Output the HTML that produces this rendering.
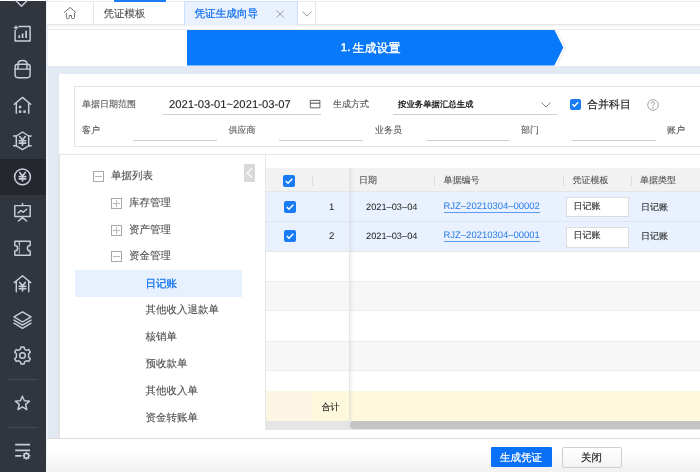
<!DOCTYPE html>
<html><head><meta charset="utf-8">
<style>
*{margin:0;padding:0;box-sizing:border-box}
html,body{width:700px;height:472px;overflow:hidden;background:#fff;font-family:"Liberation Sans",sans-serif;color:#333;text-rendering:geometricPrecision}
.a{position:absolute}
.t{position:absolute;white-space:nowrap;line-height:1}
#side{left:0;top:1px;width:46px;height:471px;background:#31353d}
#side svg{position:absolute;left:0;top:0}
.sep{position:absolute;left:7px;width:30px;height:1px;background:#474b53}
</style></head><body>
<div style="position:absolute;left:0;top:0;width:700px;height:472px;will-change:transform">
<!-- top strip -->
<div class="a" style="left:47px;top:1px;width:653px;height:1px;background:#ececec"></div>
<div class="a" style="left:114px;top:0;width:52px;height:1.5px;background:#1a7cf5"></div>
<!-- sidebar -->
<div id="side" class="a">
  <div class="a" style="left:0;top:158px;width:46px;height:36px;background:#24272d"></div>
  <div class="sep" style="top:378px"></div>
  <div class="sep" style="top:426px"></div>
</div>
<div class="a" style="left:46px;top:0;width:1.5px;height:472px;background:#eef1f5"></div>
<svg class="a" style="left:0;top:0" width="46" height="472" viewBox="0 0 46 472" fill="none" stroke="#c9cdd9" stroke-width="1.45" stroke-linejoin="round" stroke-linecap="round">
  <path d="M16 0.8 L21.5 6.2 L27 0.8" stroke-width="1.5"/>
  <path d="M19 26.4 H30.1 V40.9 H15.1 V30.4"/>
  <path d="M16 25.9 V29.5 M14.2 27.7 H17.8" stroke-width="1.3"/>
  <path d="M19.3 38 V35.2 M22.6 38 V33.4 M26.1 38 V30.7" stroke-width="1.7" stroke-linecap="butt"/>
  <rect x="15.1" y="64.2" width="15" height="13.5" rx="2.6"/>
  <path d="M15.1 69.1 H30.1 M18 69.1 V63.8 Q18 60.4 22.5 60.4 Q27 60.4 27 63.8 V69.1"/>
  <path d="M14.3 104.3 L22.5 97.4 L30.7 104.3 M16.3 102.6 V113.2 M28.7 102.6 V113.2"/>
  <g fill="#c9cdd9" stroke="none"><rect x="18.8" y="105.8" width="2.5" height="2.4"/><rect x="18.8" y="110.4" width="2.5" height="2.5"/><rect x="23.3" y="110.4" width="2.5" height="2.5"/></g>
  <path d="M16.3 136 L22.5 132 L28.7 136 V145.8 L22.5 149.6 L16.3 145.8 Z"/>
  <path d="M13.6 136 H16.3 M28.7 136 H31.2 M13.6 145.8 H16.3 M28.7 145.8 H31.2"/>
  <path d="M19.7 136.6 L22.5 140.1 L25.3 136.6 M22.5 140.1 V145.3 M19.2 140.8 H25.8 M19.2 143.1 H25.8" stroke-width="1.6"/>
  <circle cx="22.5" cy="176.9" r="7.9" stroke-width="1.55"/>
  <path d="M19.7 172.4 L22.5 175.9 L25.3 172.4 M22.5 175.9 V181 M19.2 176.6 H25.8 M19.2 178.9 H25.8" stroke-width="1.6"/>
  <path d="M22.5 203.4 V205.6"/>
  <rect x="14.8" y="205.6" width="15.4" height="10.9"/>
  <path d="M18.2 213.1 L20.8 210.4 L23.2 212.3 L26.6 209.3"/>
  <path d="M22.5 216.5 V217.6 L18.4 221 M22.5 217.6 L26.6 221"/>
  <path d="M14.8 241.3 H30.2 V245.4 A2.8 2.8 0 0 0 30.2 251 V255.2 H14.8 V251 A2.8 2.8 0 0 0 14.8 245.4 Z"/>
  <path d="M19.3 242.8 V244.8 M19.3 246.6 V246.8 M19.3 248.6 V248.8 M19.3 250.6 V250.8 M19.3 252.6 V252.8" stroke-width="1.4"/>
  <path d="M14.3 282.6 L22.5 275.8 L30.7 282.6 M16.3 281 V291.8 M28.7 281 V291.8"/>
  <path d="M19.7 282.4 L22.5 285.8 L25.3 282.4 M22.5 285.8 V291 M19.2 286.4 H25.8 M19.2 288.7 H25.8" stroke-width="1.6"/>
  <path d="M22.5 311.8 L31 316.9 L22.5 322 L14 316.9 Z"/>
  <path d="M14 320.1 L22.5 325.2 L31 320.1 M14 323.2 L22.5 328.3 L31 323.2"/>
  <path d="M21 347 H24 L24.6 349.2 L26.6 350.3 L28.8 349.6 L30.3 352.2 L28.6 353.8 V357.2 L30.3 358.8 L28.8 361.4 L26.6 360.7 L24.6 361.8 L24 364 H21 L20.4 361.8 L18.4 360.7 L16.2 361.4 L14.7 358.8 L16.4 357.2 V353.8 L14.7 352.2 L16.2 349.6 L18.4 350.3 L20.4 349.2 Z"/>
  <circle cx="22.5" cy="355.5" r="2.8"/>
  <path d="M22.4 396.2 L24.4 400.7 L29.5 401.1 L25.6 404.4 L26.8 409.6 L22.4 406.9 L18 409.6 L19.2 404.4 L15.3 401.1 L20.4 400.7 Z"/>
  <path d="M15.2 444.7 H30.1 M15.2 450.3 H30.1 M15.2 455.8 H21.4" stroke-width="1.7" stroke-linecap="butt"/>
  <circle cx="26.4" cy="455.8" r="2.3" stroke-width="1.6"/>
  <path d="M26.4 452.4 V453 M26.4 458.6 V459.2 M23 455.8 H23.6 M29.2 455.8 H29.8 M24 453.4 L24.4 453.8 M28.4 457.8 L28.8 458.2 M28.8 453.4 L28.4 453.8 M24.4 457.8 L24 458.2" stroke-width="1.4"/>
</svg>

<!-- tab bar -->
<div class="a" style="left:47px;top:2px;width:653px;height:23px;background:#fff;border-bottom:1px solid #e6e6e6;box-shadow:0 1px 1px rgba(0,0,0,0.05)"></div>
<div class="a" style="left:93px;top:2px;width:1px;height:22px;background:#e6e6e6"></div>
<svg class="a" style="left:60px;top:4px" width="22" height="18" viewBox="0 0 22 18" fill="none" stroke="#707070" stroke-width="1" stroke-linejoin="round" stroke-linecap="round">
  <path d="M4.3 8.4 L10.2 3.4 L15.8 8.4 M6.3 9.2 V13.4 Q6.3 14.7 7.6 14.7 Q9.2 14.7 9.2 13.6 V11.5 H11.5 V13.6 Q11.5 14.7 12.8 14.7 Q14.5 14.7 14.5 13.4 V9.2"/>
</svg>
<div class="t" style="left:103.5px;top:8.5px;font-size:10.5px;color:#505050;font-weight:500;-webkit-text-stroke:0.12px #505050">凭证模板</div>
<div class="a" style="left:184px;top:1px;width:114px;height:24px;background:#e8f1fd;border:1px solid #c9def9;border-bottom:none"></div>
<div class="t" style="left:194.5px;top:8.5px;font-size:10.6px;color:#1270ee;font-weight:500;-webkit-text-stroke:0.25px #1270ee">凭证生成向导</div>
<svg class="a" style="left:275.8px;top:10px" width="9" height="8" viewBox="0 0 9 8" stroke="#999" stroke-width="1"><path d="M0.5 0.4 L7.8 7.6 M7.8 0.4 L0.5 7.6"/></svg>
<div class="a" style="left:315px;top:2px;width:1px;height:22px;background:#e6e6e6"></div>
<svg class="a" style="left:301.5px;top:10.8px" width="10" height="6" viewBox="0 0 10 6" fill="none" stroke="#999" stroke-width="1"><path d="M0.5 0.5 L5 5.2 L9.5 0.5"/></svg>

<!-- step container -->
<div class="a" style="left:47px;top:29px;width:653px;height:1px;background:#ececec"></div>
<svg class="a" style="left:187px;top:30px" width="382" height="36" viewBox="0 0 382 36"><path d="M369.6 0 L378.6 17.6 L369.6 35.5" fill="none" stroke="#e9e9e9" stroke-width="1"/><path d="M0 0 H367.5 L376.3 17.6 L367.3 35.5 H0 Z" fill="#0879fa"/></svg>
<div class="t" style="left:340.8px;top:42.6px;font-size:11.4px;color:#fff;-webkit-text-stroke:0.4px #fff">1.</div><div class="t" style="left:352.5px;top:41.5px;font-size:12px;color:#fff;font-weight:500;-webkit-text-stroke:0.35px #fff">生成设置</div>

<!-- gray band & strip -->
<div class="a" style="left:47px;top:66px;width:653px;height:8px;background:#e3e9f2"></div>
<div class="a" style="left:47.5px;top:66px;width:11px;height:372px;background:#e3e9f2"></div>

<!-- form box -->
<div class="a" style="left:74px;top:86px;width:640px;height:61px;border:1px solid #e3e3e3"></div>
<div class="t" style="left:82px;top:99.5px;font-size:9px;color:#575757;font-weight:500;-webkit-text-stroke:0.12px #575757">单据日期范围</div>
<div class="t" style="left:169px;top:100px;font-size:11.25px;color:#222;-webkit-text-stroke:0.1px #222">2021-03-01~2021-03-07</div>
<svg class="a" style="left:309px;top:99px" width="12" height="10" viewBox="0 0 12 10" fill="none" stroke="#3a3a3a" stroke-width="0.9"><path d="M1.3 1.4 H10.9 V8.8 H1.3 Z" stroke="#555" stroke-linejoin="round"/><path d="M1.3 4.2 H10.9"/></svg>
<div class="a" style="left:163px;top:114px;width:158px;height:1px;background:#cfcfcf"></div>
<div class="t" style="left:333px;top:99.5px;font-size:9px;color:#575757;font-weight:500;-webkit-text-stroke:0.12px #575757">生成方式</div>
<div class="t" style="left:398px;top:99.5px;font-size:8.4px;color:#1a1a1a;font-weight:500;-webkit-text-stroke:0.3px #1a1a1a">按业务单据汇总生成</div>
<svg class="a" style="left:541px;top:102px" width="10" height="6" viewBox="0 0 10 6" fill="none" stroke="#888" stroke-width="1"><path d="M0.5 0.5 L5 5 L9.5 0.5"/></svg>
<div class="a" style="left:393px;top:114px;width:164px;height:1px;background:#cfcfcf"></div>
<div class="a" style="left:570px;top:99px;width:10.5px;height:10.5px;background:#1a7cf5;border-radius:2px"></div>
<svg class="a" style="left:570px;top:99px" width="10.5" height="10.5" viewBox="0 0 11 11" fill="none" stroke="#fff" stroke-width="1.4"><path d="M2.5 5.5 L4.6 7.6 L8.6 3.4"/></svg>
<div class="t" style="left:587px;top:100px;font-size:11px;color:#222;font-weight:500;-webkit-text-stroke:0.15px #222">合并科目</div>
<svg class="a" style="left:647px;top:99px" width="12" height="12" viewBox="0 0 12 12" fill="none" stroke="#999" stroke-width="0.9"><circle cx="6" cy="6" r="5.3"/><path d="M4.3 4.6 Q4.3 2.9 6 2.9 Q7.7 2.9 7.7 4.4 Q7.7 5.4 6 6.2 V7.3"/><circle cx="6" cy="8.9" r="0.4" fill="#999"/></svg>

<div class="t" style="left:82px;top:125.5px;font-size:9px;color:#575757;font-weight:500;-webkit-text-stroke:0.12px #575757">客户</div>
<div class="a" style="left:133px;top:140px;width:84px;height:1px;background:#cfcfcf"></div>
<div class="t" style="left:228.5px;top:125.5px;font-size:9px;color:#575757;font-weight:500;-webkit-text-stroke:0.12px #575757">供应商</div>
<div class="a" style="left:279px;top:140px;width:84px;height:1px;background:#cfcfcf"></div>
<div class="t" style="left:375px;top:125.5px;font-size:9px;color:#575757;font-weight:500;-webkit-text-stroke:0.12px #575757">业务员</div>
<div class="a" style="left:426px;top:140px;width:84px;height:1px;background:#cfcfcf"></div>
<div class="t" style="left:521px;top:125.5px;font-size:9px;color:#575757;font-weight:500;-webkit-text-stroke:0.12px #575757">部门</div>
<div class="a" style="left:572px;top:140px;width:84px;height:1px;background:#cfcfcf"></div>
<div class="t" style="left:667px;top:125.5px;font-size:9px;color:#575757;font-weight:500;-webkit-text-stroke:0.12px #575757">账户</div>

<!-- divider line -->
<div class="a" style="left:59px;top:154px;width:641px;height:1px;background:#e6e6e6"></div>

<!-- tree -->
<div class="a" style="left:58.3px;top:154px;width:1.5px;height:284px;background:#e3e3e3"></div>
<div class="a" style="left:265px;top:155px;width:1px;height:275px;background:#e6e6e6"></div>
<div class="a" style="left:244px;top:164px;width:11px;height:18px;background:#d9d9d9"></div>
<svg class="a" style="left:244px;top:164px" width="11" height="18" viewBox="0 0 11 18" fill="none" stroke="#fff" stroke-width="1.2"><path d="M7.9 4.2 L3.2 9 L7.9 13.7"/></svg>

<div class="a" style="left:93px;top:171px;width:11px;height:10.5px;border:1px solid #a8a8a8"></div>
<div class="a" style="left:95px;top:175.5px;width:7px;height:1.3px;background:#b8b8b8"></div>
<div class="t" style="left:111px;top:171px;font-size:10.5px;color:#505050;font-weight:500;-webkit-text-stroke:0.12px #505050">单据列表</div>

<div class="a" style="left:111px;top:198px;width:11px;height:10.5px;border:1px solid #a8a8a8"></div>
<div class="a" style="left:113px;top:202.5px;width:7px;height:1.3px;background:#b8b8b8"></div>
<div class="a" style="left:115.9px;top:199.9px;width:1.3px;height:7px;background:#b8b8b8"></div>
<div class="t" style="left:129px;top:198px;font-size:10.5px;color:#505050;font-weight:500;-webkit-text-stroke:0.12px #505050">库存管理</div>

<div class="a" style="left:111px;top:225px;width:11px;height:10.5px;border:1px solid #a8a8a8"></div>
<div class="a" style="left:113px;top:229.5px;width:7px;height:1.3px;background:#b8b8b8"></div>
<div class="a" style="left:115.9px;top:226.9px;width:1.3px;height:7px;background:#b8b8b8"></div>
<div class="t" style="left:129px;top:225px;font-size:10.5px;color:#505050;font-weight:500;-webkit-text-stroke:0.12px #505050">资产管理</div>

<div class="a" style="left:111px;top:251px;width:11px;height:10.5px;border:1px solid #a8a8a8"></div>
<div class="a" style="left:113px;top:255.5px;width:7px;height:1.3px;background:#b8b8b8"></div>
<div class="t" style="left:129px;top:251px;font-size:10.5px;color:#505050;font-weight:500;-webkit-text-stroke:0.12px #505050">资金管理</div>

<div class="a" style="left:75px;top:270px;width:167px;height:27px;background:#e7f1fd"></div>
<div class="t" style="left:145.5px;top:278.5px;font-size:10.5px;color:#1674f2;font-weight:500;-webkit-text-stroke:0.3px #1674f2">日记账</div>
<div class="t" style="left:145.5px;top:305px;font-size:10.5px;color:#505050;font-weight:500;-webkit-text-stroke:0.12px #505050">其他收入退款单</div>
<div class="t" style="left:145.5px;top:332px;font-size:10.5px;color:#505050;font-weight:500;-webkit-text-stroke:0.12px #505050">核销单</div>
<div class="t" style="left:145.5px;top:359px;font-size:10.5px;color:#505050;font-weight:500;-webkit-text-stroke:0.12px #505050">预收款单</div>
<div class="t" style="left:145.5px;top:386px;font-size:10.5px;color:#505050;font-weight:500;-webkit-text-stroke:0.12px #505050">其他收入单</div>
<div class="t" style="left:145.5px;top:413px;font-size:10.5px;color:#505050;font-weight:500;-webkit-text-stroke:0.12px #505050">资金转账单</div>

<!-- grid -->
<div class="a" style="left:266px;top:168px;width:434px;height:24px;background:#f2f2f2;border-bottom:1px solid #e6e6e6"></div>
<div class="a" style="left:266px;top:192px;width:434px;height:59px;background:#e8f1fd"></div>
<div class="a" style="left:266px;top:221px;width:434px;height:1px;background:#dde6f0"></div>
<div class="a" style="left:266px;top:251px;width:434px;height:1px;background:#e6e6e6"></div>
<div class="a" style="left:266px;top:281px;width:434px;height:30px;background:#f7f7f7;border-top:1px solid #ececec;border-bottom:1px solid #ececec"></div>
<div class="a" style="left:266px;top:341px;width:434px;height:30px;background:#f7f7f7;border-top:1px solid #ececec;border-bottom:1px solid #ececec"></div>
<!-- total row -->
<div class="a" style="left:266px;top:391px;width:434px;height:30px;background:#fef8dd"></div>
<div class="a" style="left:266px;top:391px;width:46px;height:30px;background:#fdf5e4"></div>
<div class="t" style="left:321.5px;top:402.5px;font-size:9px;color:#222;font-weight:500;-webkit-text-stroke:0.15px #222">合计</div>
<!-- scrollbar -->
<div class="a" style="left:266px;top:421px;width:434px;height:9px;background:#e5e5e5"></div>
<div class="a" style="left:350px;top:421px;width:360px;height:8px;background:#c4c4c4;border-radius:4px"></div>
<!-- frozen boundary -->
<div class="a" style="left:349px;top:168px;width:1px;height:253px;background:#e3e3e3"></div>
<div class="a" style="left:350px;top:168px;width:4px;height:253px;background:linear-gradient(to right,rgba(0,0,0,0.05),rgba(0,0,0,0))"></div>

<div class="a" style="left:283px;top:175px;width:12px;height:12px;background:#1a7cf5;border-radius:2px"></div>
<svg class="a" style="left:283px;top:175px" width="12" height="12" viewBox="0 0 12 12" fill="none" stroke="#fff" stroke-width="1.5"><path d="M2.8 6 L5 8.2 L9.3 3.8"/></svg>
<div class="a" style="left:312px;top:176px;width:1px;height:10px;background:#ddd"></div>
<div class="t" style="left:359px;top:175.5px;font-size:9px;color:#575757;font-weight:500;-webkit-text-stroke:0.12px #575757">日期</div>
<div class="a" style="left:434px;top:176px;width:1px;height:10px;background:#ddd"></div>
<div class="t" style="left:443.5px;top:175.5px;font-size:9px;color:#575757;font-weight:500;-webkit-text-stroke:0.12px #575757">单据编号</div>
<div class="a" style="left:563px;top:176px;width:1px;height:10px;background:#ddd"></div>
<div class="t" style="left:572.5px;top:175.5px;font-size:9px;color:#575757;font-weight:500;-webkit-text-stroke:0.12px #575757">凭证模板</div>
<div class="a" style="left:631px;top:176px;width:1px;height:10px;background:#ddd"></div>
<div class="t" style="left:640px;top:175.5px;font-size:9px;color:#575757;font-weight:500;-webkit-text-stroke:0.12px #575757">单据类型</div>

<!-- row 1 -->
<div class="a" style="left:284px;top:201px;width:12px;height:12px;background:#1a7cf5;border-radius:2px"></div>
<svg class="a" style="left:284px;top:201px" width="12" height="12" viewBox="0 0 12 12" fill="none" stroke="#fff" stroke-width="1.5"><path d="M2.8 6 L5 8.2 L9.3 3.8"/></svg>
<div class="t" style="left:329px;top:203px;font-size:9.5px;color:#222">1</div>
<div class="t" style="left:366px;top:203px;font-size:9.25px;color:#222">2021–03–04</div>
<div class="t" style="left:443.5px;top:201.5px;font-size:9.47px;color:#2a7be8;border-bottom:1.3px solid #5b9cf0;padding-bottom:1.5px">RJZ–20210304–00002</div>
<div class="a" style="left:566px;top:197px;width:63px;height:20px;background:#fff;border:1px solid #dcdcdc"></div>
<div class="t" style="left:573.5px;top:202px;font-size:9px;color:#333;font-weight:500;-webkit-text-stroke:0.15px #333">日记账</div>
<div class="t" style="left:641px;top:202.5px;font-size:9px;color:#333;font-weight:500;-webkit-text-stroke:0.15px #333">日记账</div>
<!-- row 2 -->
<div class="a" style="left:284px;top:230px;width:12px;height:12px;background:#1a7cf5;border-radius:2px"></div>
<svg class="a" style="left:284px;top:230px" width="12" height="12" viewBox="0 0 12 12" fill="none" stroke="#fff" stroke-width="1.5"><path d="M2.8 6 L5 8.2 L9.3 3.8"/></svg>
<div class="t" style="left:329px;top:232px;font-size:9.5px;color:#222">2</div>
<div class="t" style="left:366px;top:232px;font-size:9.25px;color:#222">2021–03–04</div>
<div class="t" style="left:443.5px;top:230.5px;font-size:9.47px;color:#2a7be8;border-bottom:1.3px solid #5b9cf0;padding-bottom:1.5px">RJZ–20210304–00001</div>
<div class="a" style="left:566px;top:227px;width:63px;height:20.5px;background:#fff;border:1px solid #dcdcdc"></div>
<div class="t" style="left:573.5px;top:231px;font-size:9px;color:#333;font-weight:500;-webkit-text-stroke:0.15px #333">日记账</div>
<div class="t" style="left:641px;top:231.5px;font-size:9px;color:#333;font-weight:500;-webkit-text-stroke:0.15px #333">日记账</div>

<!-- white panel bottom / footer -->
<div class="a" style="left:47px;top:438px;width:653px;height:34px;background:linear-gradient(#fff 0%,#fff 30%,#f1f1f1 100%);border-top:1px solid #dcdcdc"></div>
<div class="a" style="left:491px;top:447px;width:61px;height:20px;background:#0a70f5;border-radius:1px"></div>
<div class="t" style="left:500px;top:452.5px;font-size:10.5px;color:#fff;font-weight:500;-webkit-text-stroke:0.25px #fff">生成凭证</div>
<div class="a" style="left:562px;top:446.5px;width:60px;height:21px;background:linear-gradient(#fff,#f4f4f4);border:1px solid #cfcfcf;border-radius:2px"></div>
<div class="t" style="left:581px;top:453px;font-size:10.5px;color:#222;font-weight:500;-webkit-text-stroke:0.2px #222">关闭</div>
</div>
</body></html>
